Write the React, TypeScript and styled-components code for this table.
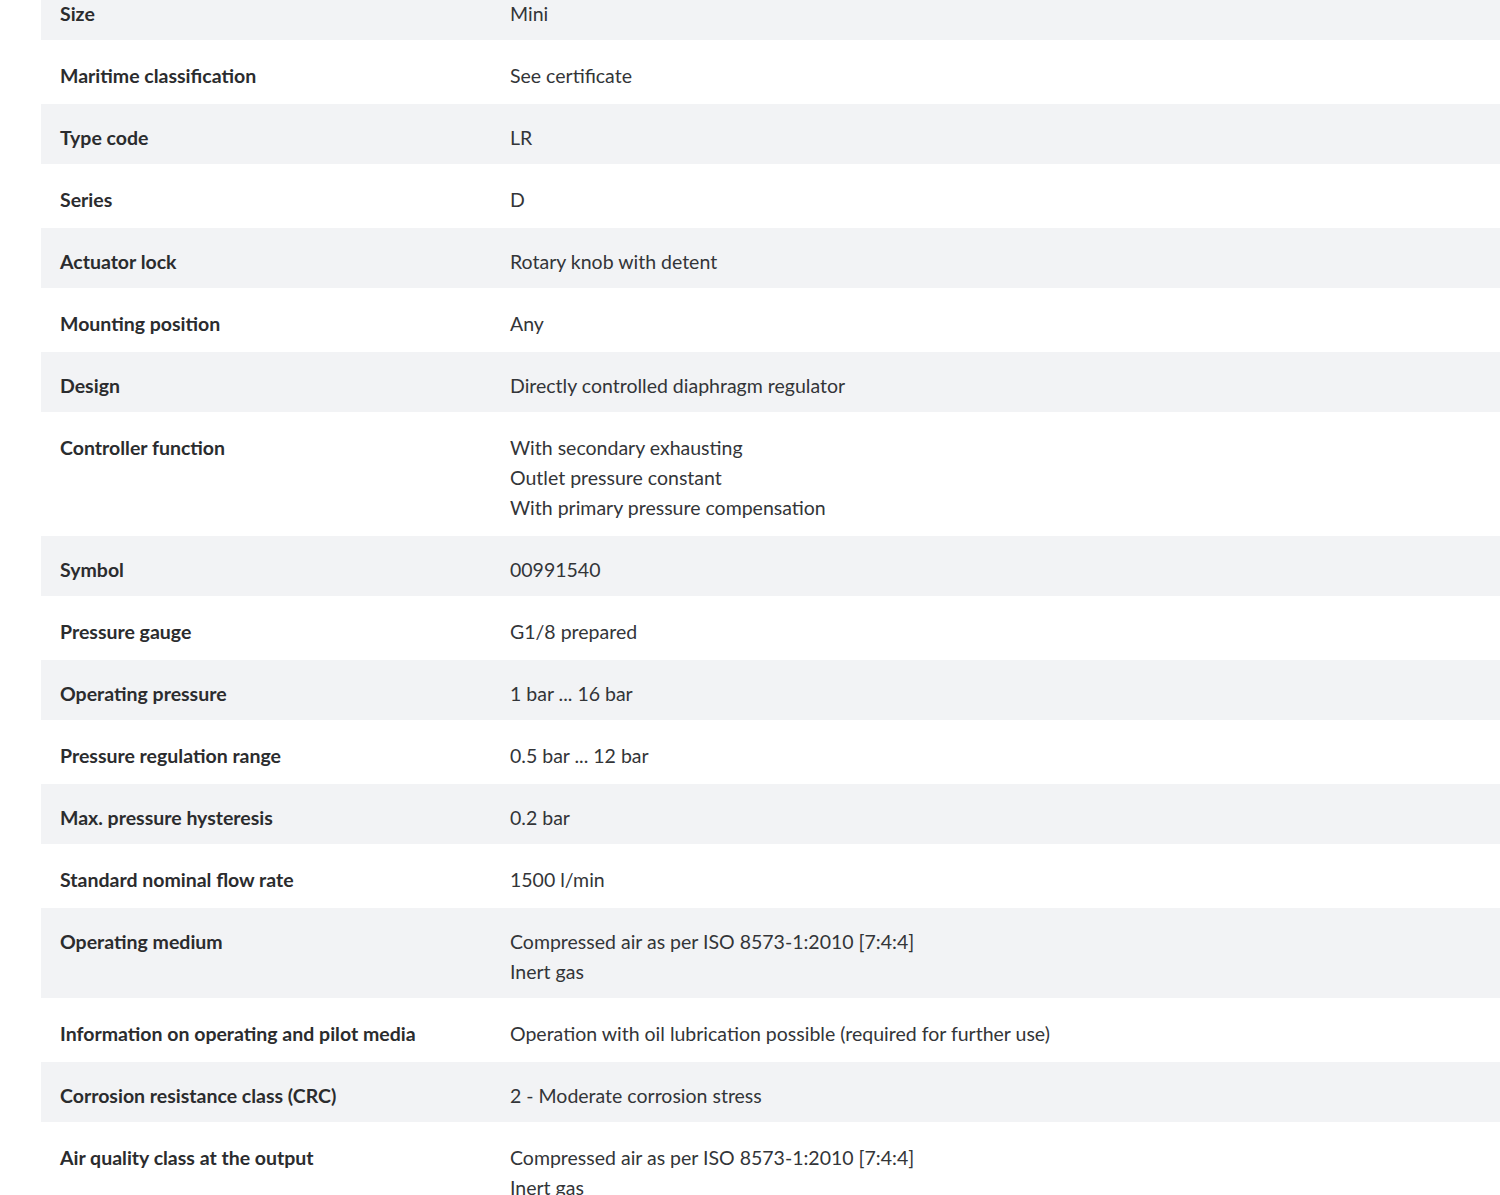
import React from "react";
import styled, { createGlobalStyle } from "styled-components";

const Global = createGlobalStyle`
  html, body { margin: 0; padding: 0; background: #ffffff; overflow: hidden; }
  body { font-family: Lato, "Liberation Sans", sans-serif; -webkit-font-smoothing: antialiased; }
`;

const Page = styled.div`
  padding-left: 41px;
  margin-top: -20px;
`;

const Table = styled.div`
  display: flex;
  flex-direction: column;
  gap: 2px;
`;

const Row = styled.div<{ $striped: boolean }>`
  display: grid;
  grid-template-columns: 450px 1fr;
  background: ${(p) => (p.$striped ? "#f2f3f5" : "#ffffff")};
`;

const Label = styled.div`
  padding: 19px 20px 11px 19px;
  font-size: 19.5px;
  line-height: 30px;
  font-weight: 700;
  color: #2b2c2e;
`;

const Value = styled.div`
  padding: 19px 20px 11px 19px;
  font-size: 19.5px;
  line-height: 30px;
  font-weight: 400;
  color: #333538;
  display: flex;
  flex-direction: column;
`;

const rows: [string, string[]][] = [
  ["Size", ["Mini"]],
  ["Maritime classification", ["See certificate"]],
  ["Type code", ["LR"]],
  ["Series", ["D"]],
  ["Actuator lock", ["Rotary knob with detent"]],
  ["Mounting position", ["Any"]],
  ["Design", ["Directly controlled diaphragm regulator"]],
  [
    "Controller function",
    ["With secondary exhausting", "Outlet pressure constant", "With primary pressure compensation"],
  ],
  ["Symbol", ["00991540"]],
  ["Pressure gauge", ["G1/8 prepared"]],
  ["Operating pressure", ["1 bar ... 16 bar"]],
  ["Pressure regulation range", ["0.5 bar ... 12 bar"]],
  ["Max. pressure hysteresis", ["0.2 bar"]],
  ["Standard nominal flow rate", ["1500 l/min"]],
  ["Operating medium", ["Compressed air as per ISO 8573-1:2010 [7:4:4]", "Inert gas"]],
  ["Information on operating and pilot media", ["Operation with oil lubrication possible (required for further use)"]],
  ["Corrosion resistance class (CRC)", ["2 - Moderate corrosion stress"]],
  ["Air quality class at the output", ["Compressed air as per ISO 8573-1:2010 [7:4:4]", "Inert gas"]],
];

export default function App() {
  return (
    <>
      <Global />
      <Page>
        <Table>
          {rows.map(([label, values], i) => (
            <Row key={label} $striped={i % 2 === 0}>
              <Label>{label}</Label>
              <Value>
                {values.map((v) => (
                  <span key={v}>{v}</span>
                ))}
              </Value>
            </Row>
          ))}
        </Table>
      </Page>
    </>
  );
}
